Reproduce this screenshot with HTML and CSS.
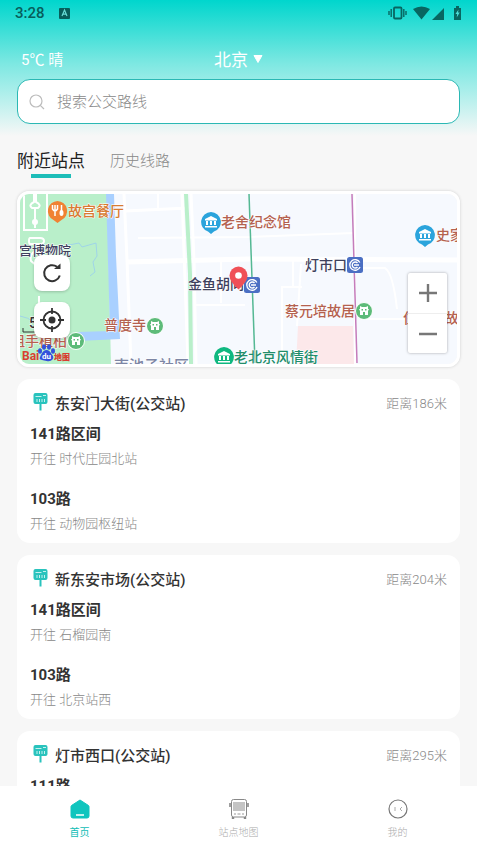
FILE: index.html
```html
<!DOCTYPE html>
<html lang="zh-CN">
<head>
<meta charset="utf-8">
<meta name="viewport" content="width=device-width, initial-scale=1">
<title>附近站点</title>
<link rel="stylesheet" href="styles.css">
</head>
<body>
<svg class="defs" width="0" height="0" aria-hidden="true">
  <symbol id="stop" viewBox="0 0 16 18">
    <path fill="#29c3bd" d="M2.500 0h10q2 0 2 2v7q0 2-2 2H8.500v6.500h-2V11h-4q-2 0-2-2V2q0-2 2-2z"/>
    <path stroke="#c5f1ef" fill="none" d="M2.500 3.500h6M10 2.500h3M4 6v3M6.500 6v3M9 6v3M11.500 6v3"/>
  </symbol>
  <symbol id="castle" viewBox="0 0 18 18">
    <circle cx="9" cy="9" r="8.500" fill="#5dbb79" stroke="#fff"/>
    <path fill="#fff" d="M5 4l2 1h4l2-1v3h1l-1 2v4h-3v-3H8v3H5V9L4 7h1z"/>
    <path fill="#5dbb79" d="M6.500 7h1.500v1.500H6.500zM10 7h1.500v1.500H10z"/>
  </symbol>
  <symbol id="museum" viewBox="0 0 20 22">
    <path d="M10 0a10 10 0 0 1 3 19.500L10 22l-3-2.500A10 10 0 0 1 10 0z"/>
    <path fill="#fff" d="M10 4l6 3v1.500H4V7zM5 9h2v4H5zM9 9h2v4H9zM13 9h2v4h-2zM4 14h12v1.500H4z"/>
  </symbol>
  <symbol id="metro" viewBox="0 0 16 16">
    <rect width="16" height="16" rx="2.500" fill="#4b6fc3"/>
    <path d="M12.800 5.500A5.300 5.300 0 1 0 13 10M12 8H7M10.500 6a3 3 0 1 0 0 4" fill="none" stroke="#fff" stroke-width="1.400"/>
  </symbol>
</svg>
<div class="app">
  <header class="top">
    <div class="status">
      <span class="clock">3:28</span>
      <svg class="badge" width="11" height="11" viewBox="0 0 11 11"><rect width="11" height="11" rx="1" fill="#075e5b"/><path d="M3 8l2.500-6L8 8M4 6.200h3" fill="none" stroke="#67dcd6" stroke-width="1.200"/></svg>
      <svg class="signals" width="74" height="16" viewBox="0 0 74 16" fill="#086661">
        <path d="M1 6v4M3.200 4v8M15.800 4v8M18 6v4" stroke="#086661" stroke-width="1.400"/>
        <rect x="6" y="2.500" width="7.500" height="11" rx="1" fill="none" stroke="#086661" stroke-width="1.800"/>
        <path d="M25 4q8.500-5 17 0L33.500 14.500zM56 3v12H44zM66 3h2V1h3v2h2v12h-7z"/>
        <path d="M70.500 4.500L67.500 9h1.700l-.5 3.500 3-5H70z" fill="#4cded8"/>
      </svg>
    </div>
    <div class="place">
      <span class="weather">5℃ 晴</span>
      <button class="city" type="button">北京<svg width="10" height="10" viewBox="0 0 10 10"><path d="M1 1.500h8L5 8.500z" fill="#fff" stroke="#fff" stroke-linejoin="round"/></svg></button>
    </div>
    <label class="search">
      <svg width="16" height="16" viewBox="0 0 16 16" fill="none" stroke="#bcbcbc" stroke-width="1.200"><circle cx="7" cy="7" r="6"/><path d="M11.300 11.300L15 15"/></svg>
      <input type="search" placeholder="搜索公交路线" aria-label="搜索公交路线">
    </label>
  </header>

  <main class="content">
    <div class="tabs">
      <button class="tab tab-on" type="button">附近站点</button>
      <button class="tab" type="button">历史线路</button>
    </div>

    <section class="map" aria-label="地图">
      <svg class="map-art" viewBox="0 0 437 170" preserveAspectRatio="xMidYMid slice">
        <rect width="437" height="170" fill="#f6f9fe"/>
        <path fill="#b9efca" d="M0 0h87l4 170H0z"/>
        <path fill="#a9d0ff" d="M86 0h8l2 62 4 83-42 2v-9l32-1z"/>
        <path fill="none" stroke="#9fd4e8" d="M44 52l15-3 3 4 14-4 1 13-4 6 2 10-5 4M0 122q8 1 15 7"/>
        <g fill="none" stroke="#fff" stroke-width="2">
          <path d="M4 0v36h23V0M14 0v8q-6 3-2 6h6q4-3-2-6V0M15 14v20M10 44h10q4 0 4 3t-4 3H10q-1 0-1-3t1-3zM15 50v4M18 56q-9 3-7 11l6 5M19 102v14"/>
          <circle cx="15" cy="28" r="2" fill="#fff"/>
        </g>
        <g fill="none" stroke="#fff">
          <path d="M104 0l3 66 4 104M162 0l6 170M171 0l3 66 2 104M105 17l64-3" stroke-width="3"/>
          <path d="M118 44l112-1 104-4M138 0v15M201 67v42M174 111h51M176 90h12M332 28M343 74h22q8 5 12 41M273 67v26M262 170V93h20M335 0v170M341 125h96M281 70l-4 62" stroke-width="2"/>
          <path d="M107 68l122-3 208 1" stroke-width="5"/>
        </g>
        <path d="M166 0l4 80 1 90" fill="none" stroke="#b9efca" stroke-width="4"/>
        <path d="M278 132h55l1 38h-58z" fill="#fce8ea"/>
        <path d="M229 0l6 169" fill="none" stroke="#54b893" stroke-width="1.500"/>
        <path d="M332 0l5 169" fill="none" stroke="#c57cbb" stroke-width="1.500"/>
        <g class="map-text">
          <text class="orange" x="48" y="22">故宫餐厅</text>
          <text class="brown" x="201" y="33">老舍纪念馆</text>
          <text class="navy narrow" x="-1" y="61">宫博物院</text>
          <text class="navy" x="285" y="76">灯市口</text>
          <text class="brown" x="416" y="46">史家</text>
          <text class="navy" x="168" y="95">金鱼胡同</text>
          <text class="brown" x="265" y="122">蔡元培故居</text>
          <text class="brown" x="84" y="136">普度寺</text>
          <text class="brown" x="383" y="129">住居地故</text>
          <text class="brown" x="-9" y="152">祖手植柏</text>
          <text class="green" x="214" y="168">老北京风情街</text>
          <text class="slate" x="94" y="177">南池子社区</text>
          <text class="scale" x="9" y="134">50</text>
        </g>
        <path d="M3 134v4h18" fill="none" stroke="#333"/>
        <path fill="#f08233" d="M37.500 7a10 10 0 0 1 4 19l-4 3-4-3a10 10 0 0 1 4-19z"/>
        <path d="M32.500 11v4q2.500 4 5 0v-4M35 11v11M41.500 11v10" fill="none" stroke="#fff" stroke-width="1.500"/><ellipse cx="41.500" cy="19" rx="2" ry="3" fill="#fff"/>
        <use href="#museum" x="181" y="18" width="20" height="22" fill="#2ba4dc"/>
        <use href="#museum" x="395" y="31" width="20" height="22" fill="#2ba4dc"/>
        <use href="#museum" x="194" y="153" width="20" height="22" fill="#0fb880"/>
        <use href="#castle" x="126" y="123" width="18" height="18"/>
        <use href="#castle" x="335" y="108" width="18" height="18"/>
        <use href="#castle" x="47" y="138" width="18" height="18"/>
        <use href="#metro" x="224" y="83" width="16" height="16"/>
        <use href="#metro" x="327" y="63" width="16" height="16"/>
        <path fill="#f05057" d="M218.500 72.500a9 9 0 0 1 9 9q0 6-9 14-9-8-9-14a9 9 0 0 1 9-9z"/><circle cx="218.500" cy="81.500" r="3.300" fill="#fff"/>
        <text class="logo-red" x="2" y="166">Bai</text>
        <g fill="#3452dc"><ellipse cx="20" cy="157" rx="2" ry="2.800"/><ellipse cx="24" cy="153" rx="2" ry="2.800"/><ellipse cx="29" cy="153" rx="2" ry="2.800"/><ellipse cx="33" cy="157" rx="2" ry="2.800"/><path d="M26.500 156q3 0 5 4 3 3 1 5.500t-6 1.500-6-1.500 1-5.500q2-4 5-4z"/></g>
        <text class="logo-du" x="22" y="165">du</text>
        <text class="logo-map" x="34" y="166">地图</text>
      </svg>
      <div class="map-tools">
        <button class="tool" type="button" aria-label="刷新"><svg width="22" height="22" viewBox="0 0 22 22" fill="none" stroke="#333" stroke-width="2"><path d="M18.800 13.500A8 8 0 1 1 16 4.800"/><path d="M13 7h6.500V1.500z" fill="#333" stroke="none"/></svg></button>
        <button class="tool" type="button" aria-label="定位"><svg width="24" height="24" viewBox="0 0 24 24" fill="none" stroke="#333" stroke-width="1.800"><circle cx="12" cy="12" r="8.500"/><circle cx="12" cy="12" r="3.500" fill="#333" stroke="none"/><path d="M12 0v6M12 18v6M0 12h6M18 12h6"/></svg></button>
      </div>
      <div class="zoom">
        <button type="button" aria-label="放大"><svg width="18" height="18" viewBox="0 0 18 18"><path d="M9 0v18M0 9h18" stroke="#777" stroke-width="2.400"/></svg></button>
        <button type="button" aria-label="缩小"><svg width="18" height="18" viewBox="0 0 18 18"><path d="M0 9h18" stroke="#777" stroke-width="2.400"/></svg></button>
      </div>
    </section>

    <article class="card">
      <div class="card-head"><svg width="16" height="18"><use href="#stop"/></svg><h2>东安门大街(公交站)</h2><span class="distance">距离186米</span></div>
      <div class="route"><h3>141路区间</h3><p>开往 时代庄园北站</p></div>
      <div class="route"><h3>103路</h3><p>开往 动物园枢纽站</p></div>
    </article>
    <article class="card">
      <div class="card-head"><svg width="16" height="18"><use href="#stop"/></svg><h2>新东安市场(公交站)</h2><span class="distance">距离204米</span></div>
      <div class="route"><h3>141路区间</h3><p>开往 石榴园南</p></div>
      <div class="route"><h3>103路</h3><p>开往 北京站西</p></div>
    </article>
    <article class="card">
      <div class="card-head"><svg width="16" height="18"><use href="#stop"/></svg><h2>灯市西口(公交站)</h2><span class="distance">距离295米</span></div>
      <div class="route"><h3>111路</h3></div>
    </article>
  </main>

  <nav class="nav">
    <a class="nav-on" href="#home"><svg width="22" height="22" viewBox="0 0 22 22"><path d="M11 2l8.500 5.500q.5.500.5 1V18q0 2-2 2H4q-2 0-2-2V8.500q0-.5.500-1z" fill="#10c5be" stroke="#10c5be" stroke-linejoin="round"/><path d="M7 17h8" stroke="#fff" stroke-width="1.500"/></svg>首页</a>
    <a href="#stations"><svg width="22" height="22" viewBox="0 0 22 22"><path d="M5 19v2M17 19v2" stroke="#888" stroke-width="2.400"/><rect x="3.500" y="1.500" width="15" height="17.500" rx="2" fill="#fff" stroke="#888"/><path d="M5 4h12v9H5z" fill="#c4c4c4"/><path d="M6 16h2M14 16h2M9.500 16h3" stroke="#999"/><path d="M2 5v4M20 5v4" stroke="#888" stroke-width="1.600"/></svg>站点地图</a>
    <a href="#me"><svg width="22" height="22" viewBox="0 0 22 22" fill="none" stroke="#777"><circle cx="11" cy="11" r="9" stroke-width="1.200"/><path d="M8 9v4M15 9l-2 2 2 2" stroke="#aaa"/></svg>我的</a>
  </nav>
</div>
</body>
</html>
```
FILE: styles.css
```css
* { box-sizing: border-box; }
body {
  margin: 0;
  background: #f7f7f7;
  color: #333;
  font-family: Roboto, "Noto Sans CJK SC", sans-serif;
}
h2, h3, p { margin: 0; }
button { padding: 0; border: 0; background: none; color: inherit; font: inherit; }
svg { display: block; flex: none; }
.defs { position: absolute; }

.app { display: flex; flex-direction: column; height: 100vh; overflow: hidden; }

.top {
  flex: none;
  padding: 0 17px 12px;
  background: linear-gradient(#00d6cd 0, #7ee8e2 64px, #a8eeea 90px, #f7f7f7 100%);
}
.status { display: flex; align-items: center; height: 26px; margin-right: -2px; }
.clock { margin-right: 14px; margin-left: -2px; color: #075e5b; font-size: 15px; font-weight: 500; }
.signals { margin-left: auto; }
.place {
  display: grid;
  grid-template-columns: 1fr auto 1fr;
  align-items: center;
  height: 53px;
  padding: 12px 4px 0;
  color: #fff;
}
.weather { font-size: 15px; }
.city { display: flex; align-items: center; gap: 5px; font-size: 17px; }
.search {
  display: flex;
  align-items: center;
  gap: 12px;
  height: 45px;
  padding: 0 11px;
  border: 1px solid #2bb8b4;
  border-radius: 13px;
  background: #fff;
}
.search input {
  flex: 1;
  min-width: 0;
  padding: 0;
  border: 0;
  outline: 0;
  background: none;
  font: 300 15px Roboto, "Noto Sans CJK SC", sans-serif;
}
.search input::placeholder { color: #888; opacity: 1; }

.content { flex: 1; min-height: 0; padding: 0 17px; overflow: hidden; }
.tabs { display: flex; gap: 25px; height: 55px; padding-top: 8px; }
.tab { position: relative; height: 34px; padding-bottom: 4px; color: #888; font-size: 15px; font-weight: 300; }
.tab-on { color: #222; font-size: 17px; font-weight: 400; }
.tab-on::after {
  content: "";
  position: absolute;
  bottom: 0;
  left: 50%;
  width: 40px;
  height: 4px;
  margin-left: -20px;
  background: #1dbdb8;
}

.map {
  position: relative;
  height: 176px;
  border: 3px solid #fff;
  border-radius: 12px;
  box-shadow: 0 0 3px #ccc;
  overflow: hidden;
}
.map-art { width: 100%; height: 100%; }
.map-text { font-size: 14px; font-weight: 500; paint-order: stroke; stroke: #fff; stroke-width: 1px; }
.orange { fill: #d87b32; }
.brown { fill: #b4614f; }
.navy { fill: #3e415d; }
.narrow { font-size: 13px; }
.green { fill: #218d6b; }
.slate { fill: #7d86a5; font-size: 15px; }
.scale { fill: #333; }
.logo-red { fill: #d83f31; font: 700 12px Roboto, sans-serif; }
.logo-du { fill: #fff; font: 700 8px Roboto, sans-serif; }
.logo-map { fill: #d83f31; font-size: 8px; font-weight: 900; }
.map-tools { position: absolute; top: 61px; left: 14px; display: grid; gap: 11px; }
.tool {
  display: grid;
  place-items: center;
  width: 36px;
  height: 36px;
  border-radius: 8px;
  background: #fff;
  box-shadow: 0 1px 3px #0003;
}
.zoom {
  position: absolute;
  right: 10px;
  bottom: 11px;
  width: 39px;
  border-radius: 2px;
  background: #fff;
  box-shadow: 0 0 3px #0005;
}
.zoom button { display: grid; place-items: center; width: 100%; height: 40px; }
.zoom button + button { border-top: 1px solid #eee; }

.card { margin-top: 12px; padding: 12px 13px 0; border-radius: 13px; background: #fff; }
.card-head { display: flex; align-items: center; height: 22px; padding-left: 3px; }
.card-head h2 { margin-left: 6px; font-size: 15px; font-weight: 500; }
.distance { margin-left: auto; color: #888; font-size: 13px; font-weight: 300; }
.route { height: 65px; padding-top: 10px; }
.route h3 { font-size: 15px; font-weight: 700; line-height: 22px; }
.route p { margin-top: 3px; color: #888; font-size: 13px; font-weight: 300; line-height: 22px; }

.nav {
  flex: none;
  display: grid;
  grid-template-columns: repeat(3, 1fr);
  height: 63px;
  background: #fff;
}
.nav a {
  display: flex;
  flex-direction: column;
  align-items: center;
  gap: 5px;
  padding-top: 12px;
  color: #aaa;
  font-size: 10px;
  font-weight: 300;
  line-height: 16px;
  text-decoration: none;
}
.nav .nav-on { color: #10bdb6; font-weight: 400; }
```
